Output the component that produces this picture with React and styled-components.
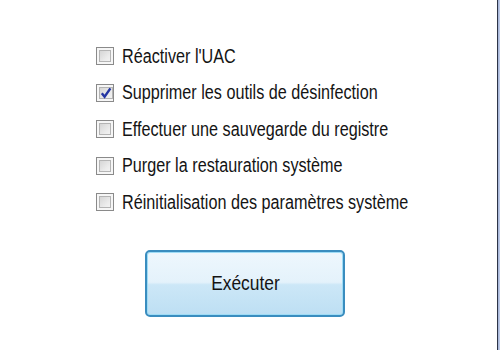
import React from 'react'
import styled, { createGlobalStyle } from 'styled-components'

const GlobalStyle = createGlobalStyle`
    html, body {
        margin: 0;
        padding: 0;
        background: #ffffff;
    }
`

const options = [
    { label: "Réactiver l'UAC", checked: false },
    { label: 'Supprimer les outils de désinfection', checked: true },
    { label: 'Effectuer une sauvegarde du registre', checked: false },
    { label: 'Purger la restauration système', checked: false },
    { label: 'Réinitialisation des paramètres système', checked: false },
]

function Check({ checked }) {
    return (
        <Box>
            <Inner>
                {checked && (
                    <svg width="12" height="12" viewBox="0 0 12 12">
                        <path d="M1.8 6.2 L4.6 9.8 L10.4 1.4" fill="none" stroke="#2536a3" strokeWidth="2.4" />
                    </svg>
                )}
            </Inner>
        </Box>
    )
}

function App() {
    return (
        <>
            <GlobalStyle />
            <Window>
                <Content>
                    <List>
                        {options.map(o => (
                            <Row key={o.label}>
                                <Check checked={o.checked} />
                                <Label>{o.label}</Label>
                            </Row>
                        ))}
                    </List>
                    <ButtonWrap>
                        <RunButton><ButtonText>Exécuter</ButtonText></RunButton>
                    </ButtonWrap>
                </Content>
                <Edge />
            </Window>
        </>
    )
}

export default App

const Window = styled.div`
    display: flex;
    width: 500px;
    height: 350px;
    background: #ffffff;
    overflow: hidden;
`

const Content = styled.div`
    flex: 1;
    padding: 46px 0 0 96px;
`

const List = styled.div`
    display: flex;
    flex-direction: column;
    gap: 16.5px;
`

const Row = styled.div`
    display: flex;
    align-items: center;
    height: 20px;
`

const Box = styled.div`
    box-sizing: border-box;
    width: 18px;
    height: 18px;
    margin-right: 8px;
    border: 1px solid #8a8a8a;
    background: #f6f6f6;
    padding: 2px;
    display: flex;
`

const Inner = styled.div`
    flex: 1;
    border: 1px solid #b4b4b4;
    background: linear-gradient(135deg, #d6d6d6 0%, #ececec 70%, #f2f2f2 100%);
    display: flex;
    align-items: center;
    justify-content: center;
`

const Label = styled.span`
    display: inline-block;
    font-family: "Liberation Sans", Arial, sans-serif;
    font-size: 20px;
    color: #141414;
    white-space: nowrap;
    transform: scaleX(0.81);
    transform-origin: left center;
`

const ButtonWrap = styled.div`
    padding: 38px 0 0 49px;
`

const RunButton = styled.button`
    box-sizing: border-box;
    width: 200px;
    height: 67px;
    border: 2px solid #3a8dbf;
    border-radius: 5px;
    background: linear-gradient(to bottom, #eef7fd 0%, #e4f2fb 48%, #cce7f7 52%, #bddff3 100%);
    box-shadow: inset 0 0 0 1px #9edcf6;
    padding: 0;
    display: flex;
    align-items: center;
    justify-content: center;
`

const ButtonText = styled.span`
    display: inline-block;
    font-family: "Liberation Sans", Arial, sans-serif;
    font-size: 20px;
    color: #141414;
    transform: scaleX(0.87);
`

const Edge = styled.div`
    width: 3px;
    height: 100%;
    background: linear-gradient(to right, #2d3447 0%, #2d3447 33%, #9fb0d6 34%, #c9d3ec 100%);
`
